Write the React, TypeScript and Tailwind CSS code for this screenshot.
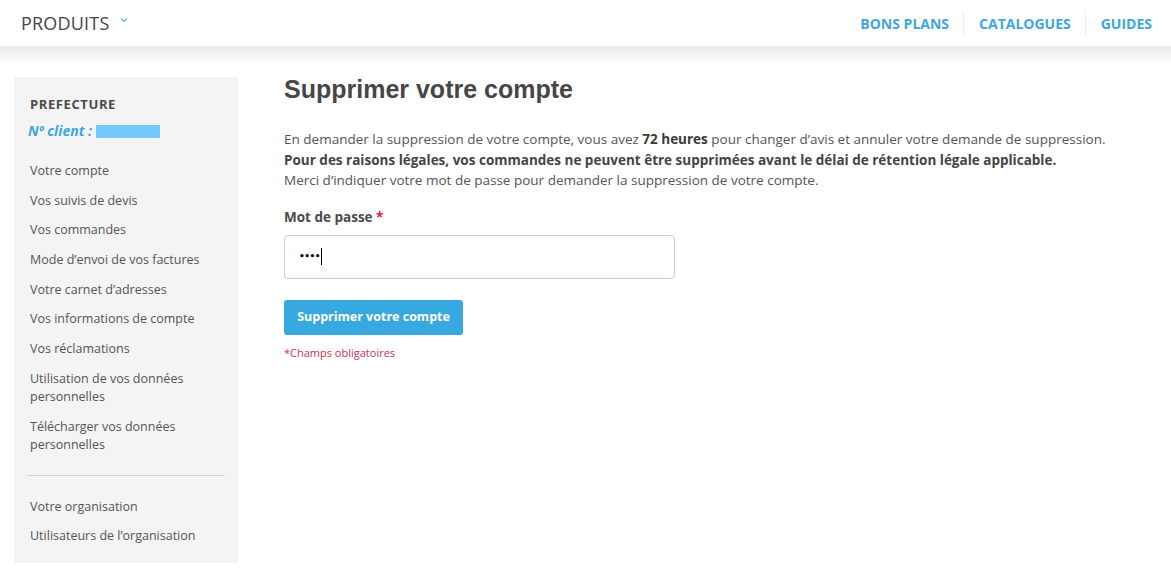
import React from 'react';

const menuTop = [
  'Votre compte',
  'Vos suivis de devis',
  'Vos commandes',
  'Mode d’envoi de vos factures',
  'Votre carnet d’adresses',
  'Vos informations de compte',
  'Vos réclamations',
  'Utilisation de vos données personnelles',
  'Télécharger vos données personnelles',
];

const menuBottom = ['Votre organisation', 'Utilisateurs de l’organisation'];

const Header: React.FC = () => (
  <header className="h-[46px] bg-white flex items-center justify-between pl-[21px] pr-[19px]">
    <div className="flex items-center gap-[10px] text-[18px] text-[#454545] tracking-[0.2px]">
      PRODUITS
      <svg className="w-[8px] h-[6px] mt-[-6px]" viewBox="0 0 8 6" fill="none">
        <path d="M1 1.5l3 3 3-3" stroke="#5aa9d8" strokeWidth="1.2" />
      </svg>
    </div>
    <nav className="flex items-center text-[14px] font-bold text-[#3ea6df]">
      <span className="pr-[14px]">BONS PLANS</span>
      <span className="h-[25px] border-l border-[#ececec]" />
      <span className="pl-[15px] pr-[14px]">CATALOGUES</span>
      <span className="h-[25px] border-l border-[#ececec]" />
      <span className="pl-[15px]">GUIDES</span>
    </nav>
  </header>
);

const Sidebar: React.FC = () => (
  <aside className="w-[224px] bg-[#f4f4f4] pt-[18px] pb-[18px] shrink-0">
    <div className="px-[16px]">
      <div className="text-[13px] font-bold text-[#4a4a4a] tracking-[0.6px] leading-[18px]">PREFECTURE</div>
      <div className="mt-[9px] flex items-center text-[14px] font-bold italic text-[#3ea6df] leading-[18px]">
        <span className="ml-[-2px]">Nº client :</span>
        <span className="ml-[4px] inline-block w-[64px] h-[13px] bg-[#74c9fa]" />
      </div>
    </div>
    <ul className="mt-[22px] px-[16px] text-[12.5px] text-[#555] flex flex-col gap-[11.7px]">
      {menuTop.map((item) => (
        <li key={item} className="leading-[18px]">{item}</li>
      ))}
    </ul>
    <div className="mx-[13px] mt-[21px] border-t border-[#d4d4d4]" />
    <ul className="mt-[22px] px-[16px] text-[12.5px] text-[#555] flex flex-col gap-[11.5px]">
      {menuBottom.map((item) => (
        <li key={item} className="leading-[18px]">{item}</li>
      ))}
    </ul>
  </aside>
);

const App: React.FC = () => {
  return (
    <div className="min-h-[569px] bg-white" style={{ fontFamily: '"Open Sans", sans-serif' }}>
      <Header />
      <div className="h-[20px] bg-gradient-to-b from-[#ebebeb] to-white" />
      <div className="flex px-[14px] pt-[11px] pb-[6px]">
        <Sidebar />
        <main className="ml-[46px] flex-1 text-[#555]">
          <h1 className="text-[25px] font-bold text-[#464646] leading-[24px]" style={{ fontFamily: '"Liberation Sans", Arial, sans-serif' }}>
            Supprimer votre compte
          </h1>
          <div className="mt-[28px] text-[13.5px] leading-[20.5px]">
            <p>
              En demander la suppression de votre compte, vous avez <b className="text-[#3a3a3a]">72 heures</b> pour changer d’avis et annuler votre demande de suppression.
            </p>
            <p className="font-bold text-[#444]">
              Pour des raisons légales, vos commandes ne peuvent être supprimées avant le délai de rétention légale applicable.
            </p>
            <p>Merci d’indiquer votre mot de passe pour demander la suppression de votre compte.</p>
          </div>
          <label className="block mt-[16px] text-[13.5px] font-bold text-[#4a4a4a] leading-[20px]">
            Mot de passe <span className="text-[#e0213a]">*</span>
          </label>
          <div className="mt-[8px] w-[391px] h-[44px] border border-[#cccccc] rounded-[4px] flex items-center pl-[14px]">
            <span className="text-[9px] text-black tracking-[-0.5px] leading-none font-bold" style={{ fontFamily: '"DejaVu Sans", sans-serif' }}>••••</span>
            <span className="ml-[1px] w-[1px] h-[17px] bg-black" />
          </div>
          <button className="mt-[21px] h-[35px] w-[179px] rounded-[3px] bg-[#37a9e0] text-white text-[12.5px] font-bold">
            Supprimer votre compte
          </button>
          <p className="mt-[10px] text-[11px] text-[#d0314e] leading-[16px]">*Champs obligatoires</p>
        </main>
      </div>
    </div>
  );
};

export default App;
